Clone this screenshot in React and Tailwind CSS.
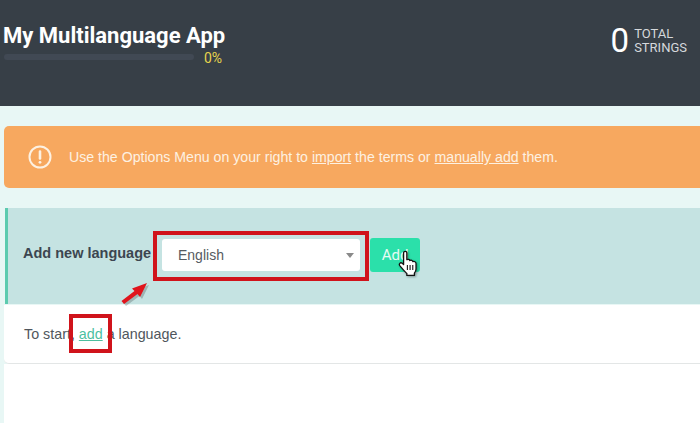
import React from "react";

const sans = "font-['Liberation_Sans',Arial,sans-serif]";

function Cursor() {
  return (
    <svg
      className="absolute left-[398px] top-[250px] drop-shadow-[1px_1px_1px_rgba(0,0,0,0.35)]"
      width="22"
      height="27"
      viewBox="0 0 20 25"
    >
      <path
        d="M5 2.500C5 .8 8 .8 8 2.500V9C8.800 8.300 10.500 8.500 10.800 9.800C11.800 9.100 13.300 9.500 13.600 10.800C14.800 10.200 16.500 11 16.500 12.500V17.500C16.500 19.500 15.800 20.500 15 21.500V23.500H8V21.800C6 20 3.500 16.800 1.500 14.500C.3 13 2 11 3.700 12.300L5 13.500Z"
        fill="#fff"
        stroke="#111"
        strokeWidth="1.200"
        strokeLinejoin="round"
      />
      <path d="M8.500 14v4.500M11 14v4.500M13.500 14v4.500" stroke="#111" strokeWidth="1" />
    </svg>
  );
}

function Arrow() {
  return (
    <svg className="absolute left-[118px] top-[279px]" width="34" height="28" viewBox="0 0 34 28">
      <path d="M31 6 L24 20 L21.500 17 L8 27 L5.500 24 L18.500 14 L16 11.500 Z" fill="#000" opacity="0.2" />
      <path d="M29 4 L22 18 L19.500 15 L6 25 L3.500 22 L16.500 12 L14 9.500 Z" fill="#e0141c" />
    </svg>
  );
}

export default function App() {
  return (
    <div className={`relative h-[423px] w-[700px] overflow-hidden bg-[#e8f7f5] ${sans}`}>
      <header className="flex h-[106px] justify-between bg-[#373f47] pl-[3px] pr-[13px] pt-[21px]">
        <div>
          <h1 className="font-['Roboto',sans-serif] text-[22px] font-bold leading-[29px] text-white">
            My Multilanguage App
          </h1>
          <div className="ml-px flex h-[14px] items-start">
            <div className="mt-[4px] h-[6px] w-[190px] rounded-full bg-[#414954]" />
            <span className="ml-[10px] mt-px font-['Roboto',sans-serif] text-[14px] leading-[14px] text-[#e8d44d]">
              0%
            </span>
          </div>
        </div>
        <div className="flex items-start pt-[3px] font-['Roboto',sans-serif]">
          <span className="text-[33px] leading-[33px] text-white">0</span>
          <span className="ml-[5px] mt-[3px] text-[13px] leading-[13.500px] text-[#d5d8dc]">
            TOTAL
            <br />
            STRINGS
          </span>
        </div>
      </header>

      <div className="ml-1 mt-5 flex h-[62px] items-center rounded-l-[5px] bg-[#f7a85f] pl-[24px] text-[14.150px] text-[#fdf1e2]">
        <svg width="24" height="24" viewBox="0 0 24 24" fill="none" stroke="#fdf1e2" strokeWidth="2">
          <circle cx="12" cy="12" r="10.500" />
          <path d="M12 6.500v7" strokeWidth="2.600" strokeLinecap="round" />
          <circle cx="12" cy="17.300" r="1.400" fill="#fdf1e2" stroke="none" />
        </svg>
        <p className="ml-[17px] pt-[2px]">
          Use the Options Menu on your right to <span className="underline">import</span> the terms or{" "}
          <span className="underline">manually add</span> them.
        </p>
      </div>

      <div className="ml-[5px] mt-5 flex h-[96px] items-center border-l-[3px] border-[#5ccbaf] bg-[#c5e3e2] pb-[2px] pl-[15px]">
        <span className="-mt-[2px] w-[139px] whitespace-nowrap text-[14.500px] font-bold text-[#3c4650]">
          Add new language
        </span>
        <div className="relative flex h-[32px] w-[198px] items-center rounded-[3px] bg-white pl-4 pr-[6px] text-[14px] text-[#555b61]">
          <span>English</span>
          <svg className="ml-auto" width="8" height="5" viewBox="0 0 8 5">
            <path d="M0 0h8L4 5z" fill="#8a8a8a" />
          </svg>
        </div>
        <div className="ml-[10px] flex h-[34px] w-[50px] items-center justify-center rounded-[3px] bg-[#2be0aa] font-['Roboto',sans-serif] text-[15px] text-[#e6fbf4]">
          Add
        </div>
      </div>

      <div className="ml-1 mt-px flex h-[59px] items-center rounded-bl-[5px] border-b border-[#e3e6e6] bg-white pl-5 pt-[2px] text-[14.300px] text-[#50565c]">
        <p>
          To start, <span className="text-[#4cbf9f] underline">add</span> a language.
        </p>
      </div>

      <div className="ml-1 h-[60px] bg-white" />

      {/* annotations over the screenshot */}
      <div className="absolute left-[153px] top-[231px] h-[50px] w-[216px] border-4 border-[#d0131b]" />
      <div className="absolute left-[69px] top-[314px] h-[39px] w-[43px] border-4 border-[#d0131b]" />
      <Arrow />
      <Cursor />
    </div>
  );
}
